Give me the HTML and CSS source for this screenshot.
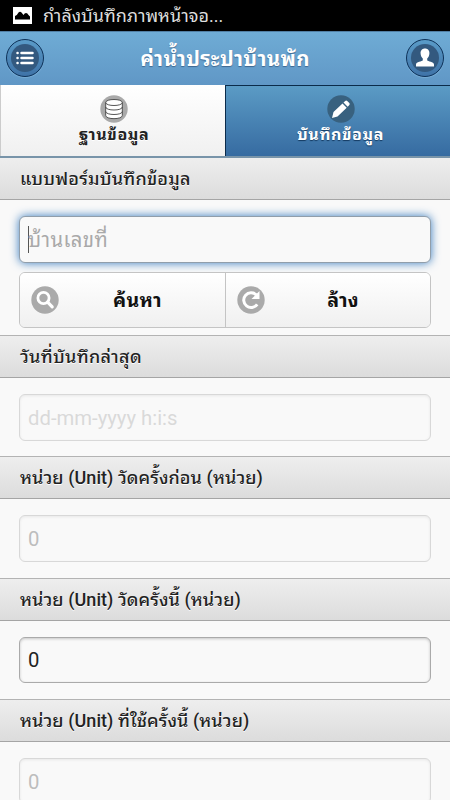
FILE: index.html
```html
<!DOCTYPE html>
<html lang="th">
<head>
<meta charset="utf-8">
<title>ค่าน้ำประปาบ้านพัก</title>
<link rel="stylesheet" href="styles.css">
</head>
<body>
<div class="status">
  <svg width="19" height="17" viewBox="0 0 19 17"><path fill="#fff" d="M0 0h19v17H0z"/><path d="M2 12.500V9q2-.5 3.500-3.500 1.500-1.500 3 0L10.500 8q1-2 2.500-2 1.500 0 2.500 2l1.500 1.500v3z"/></svg>
  <span>กำลังบันทึกภาพหน้าจอ...</span>
</div>
<header class="header">
  <button class="round" aria-label="เมนู">
    <svg width="28" height="28" viewBox="0 0 28 28"><circle cx="14" cy="14" r="14" fill="#33597f"/><g stroke="#fff" stroke-width="2.500" stroke-linecap="round"><path d="M10.500 9H21.500M10.500 14H21.500M10.500 19H21.500M6.500 9h.1M6.500 14h.1M6.500 19h.1"/></g></svg>
  </button>
  <h1>ค่าน้ำประปาบ้านพัก</h1>
  <button class="round" aria-label="ผู้ใช้">
    <svg width="28" height="28" viewBox="0 0 28 28"><circle cx="14" cy="14" r="14" fill="#33597f"/><path fill="#fff" d="M14 4.500c3 0 4.600 2.200 4.400 5-.1 2.300-1 4-2.200 5v1.800c.5 1.200 6.800 1.600 6.800 4.200v2H5v-2c0-2.600 6.300-3 6.800-4.200v-1.800c-1.200-1-2.100-2.700-2.200-5-.2-2.800 1.400-5 4.400-5z"/></svg>
  </button>
</header>
<nav class="tabs">
  <a class="tab">
    <svg width="28" height="28" viewBox="0 0 28 28"><circle cx="14" cy="14" r="13.700" fill="#a9a9a9"/><path fill="#fff" stroke="#444" stroke-width=".9" d="M5.700 7.500v13c0 4.200 16.600 4.200 16.600 0v-13c0-4-16.600-4-16.600 0z"/><path fill="none" stroke="#444" stroke-width=".9" d="M5.700 7.500c0 4 16.600 4 16.600 0M5.700 12c0 4 16.600 4 16.600 0M5.700 16.500c0 4 16.600 4 16.600 0"/></svg>
    <span>ฐานข้อมูล</span>
  </a>
  <a class="tab active">
    <svg width="28" height="28" viewBox="0 0 28 28"><circle cx="14" cy="14" r="13.700" fill="#38617f"/><path fill="#fff" d="M5 23l1.500-6L15.500 8.500l4.200 4.200L10.500 21.500zM16.500 7.500l1.700-1.600q1-.8 2 0l2.100 2.100q.9 1 0 2l-1.600 1.700z"/></svg>
    <span>บันทึกข้อมูล</span>
  </a>
</nav>
<main>
  <h2 class="first"><span>แบบฟอร์มบันทึกข้อมูล</span></h2>
  <div class="row search">
    <div class="field focus"><i class="caret"></i><span>บ้านเลขที่</span></div>
    <div class="buttons">
      <button class="btn"><svg width="28" height="28" viewBox="0 0 28 28"><circle cx="14" cy="14" r="13.700" fill="#aaa"/><circle cx="12.500" cy="12" r="5.600" fill="none" stroke="#fff" stroke-width="2.800"/><path d="M16.600 16.200l4.600 4.600" stroke="#fff" stroke-width="3.200" stroke-linecap="round"/></svg><span>ค้นหา</span></button>
      <button class="btn"><svg width="28" height="28" viewBox="0 0 28 28"><circle cx="14" cy="14" r="13.700" fill="#aaa"/><path d="M20.200 18.300A7.400 7.400 0 1 1 19.400 8.900" fill="none" stroke="#fff" stroke-width="3"/><path fill="#fff" d="M22.500 5v8h-8z"/></svg><span>ล้าง</span></button>
    </div>
  </div>
  <h2 class="wide"><span>วันที่บันทึกล่าสุด</span></h2>
  <div class="row"><div class="field disabled hint">dd-mm-yyyy h:i:s</div></div>
  <h2><span>หน่วย (Unit) วัดครั้งก่อน (หน่วย)</span></h2>
  <div class="row"><div class="field disabled">0</div></div>
  <h2><span>หน่วย (Unit) วัดครั้งนี้ (หน่วย)</span></h2>
  <div class="row"><div class="field">0</div></div>
  <h2><span>หน่วย (Unit) ที่ใช้ครั้งนี้ (หน่วย)</span></h2>
  <div class="row"><div class="field disabled">0</div></div>
</main>
</body>
</html>
```
FILE: styles.css
```css
* { box-sizing: border-box; }
html, body { height: 800px; overflow: hidden; }
body { margin: 0; background: #f9f9f9; color: #222; font-family: Roboto, "Droid Sans Thai", "Noto Sans Thai Looped", "Noto Looped Thai", Waree, Loma, Garuda, Umpush, Tahoma, sans-serif; }
svg { display: block; flex: none; }
button { font: inherit; margin: 0; padding: 0; }
.status { height: 31px; background: #000; color: #ddd; display: flex; align-items: center; gap: 11px; padding-left: 13px; font-size: 18px; line-height: 30px; white-space: nowrap; }
.header { height: 54px; display: flex; align-items: center; justify-content: space-between; padding: 0 6px 0; border-top: 1px solid #517fa4; background: linear-gradient(#6facd5, #6097c6); }
.header h1 { margin: 0; padding-top: 1px; font-size: 20.500px; letter-spacing: .35px; line-height: 30px; color: #fff; text-shadow: 0 1px 1px #3e6790; white-space: nowrap; }
.round { width: 38px; height: 38px; margin-bottom: 2px; border: 1px solid #0d3158; border-radius: 50%; display: grid; place-items: center; background: linear-gradient(#5a9bc8, #3f73a8); box-shadow: 0 1px 1px #79add5; }
.tabs { height: 71px; display: grid; grid-template-columns: 225px 225px; }
.tab { display: flex; flex-direction: column; align-items: center; padding: 10px 0 0 2px; border-left: 1px solid #ccc; background: linear-gradient(#fff, #f0f0f0); color: #222; font-weight: bold; font-size: 16px; letter-spacing: .6px; line-height: 24px; text-shadow: 0 1px 0 #fff; white-space: nowrap; }
.tab.active { padding: 9px 0 0 5px; color: #fff; border-left: 1px solid #0b2b4a; border-top: 1px solid #0b2b4a; background: linear-gradient(#5b9bc5, #366ba1); text-shadow: 0 1px 1px #143a61; }
h2 { margin: 0; height: 43px; padding: 0 20px; border-top: 1px solid #b3b3b3; border-bottom: 1px solid #a5a5a5; background: linear-gradient(#eee, #dcdcdc); font-size: 18px; letter-spacing: .06px; font-weight: 500; line-height: 41px; text-shadow: 0 1px 0 #fff; white-space: nowrap; }
h2.wide { letter-spacing: .3px; }
h2.first { height: 44px; border-top: 2px solid #7894a9; line-height: 41px; letter-spacing: .2px; }
.row { padding: 16px 19px 0; height: 78.300px; }
.row.search { height: 135px; }
.field { height: 46.500px; display: flex; align-items: center; padding: 1px 8px 0; border: 1px solid #aaa; border-radius: 6px; background: #f9f9f9; box-shadow: inset 0 1px 3px #0003; color: #222; font-size: 20.300px; line-height: 40px; white-space: nowrap; }
.field.disabled { color: #bdbdbd; border-color: #d8d8d8; box-shadow: inset 0 1px 3px #00000012; }
.field.hint { color: #d9d9d9; }
.field.focus { padding-top: 2px; color: #a9a9a9; border-color: #909eab; box-shadow: 0 0 10px #387bbe; letter-spacing: .4px; }
.caret { width: 1px; height: 27px; margin: -2px -1px 0 0; background: #555; }
.buttons { margin-top: 9.500px; display: grid; grid-template-columns: 205px 1fr; height: 56px; border: 1px solid #c4c4c4; border-radius: 6px; overflow: hidden; }
.btn { border: 0; display: flex; align-items: center; padding: 0 11px; color: #111; font-weight: bold; font-size: 19.500px; letter-spacing: .3px; background: linear-gradient(#fff, #f0f0f0); text-shadow: 0 1px 0 #fff; }
.btn + .btn { border-left: 1px solid #c4c4c4; }
.btn span { flex: 1; text-align: center; line-height: 24px; padding: 1px 0 0 2px; }
```
